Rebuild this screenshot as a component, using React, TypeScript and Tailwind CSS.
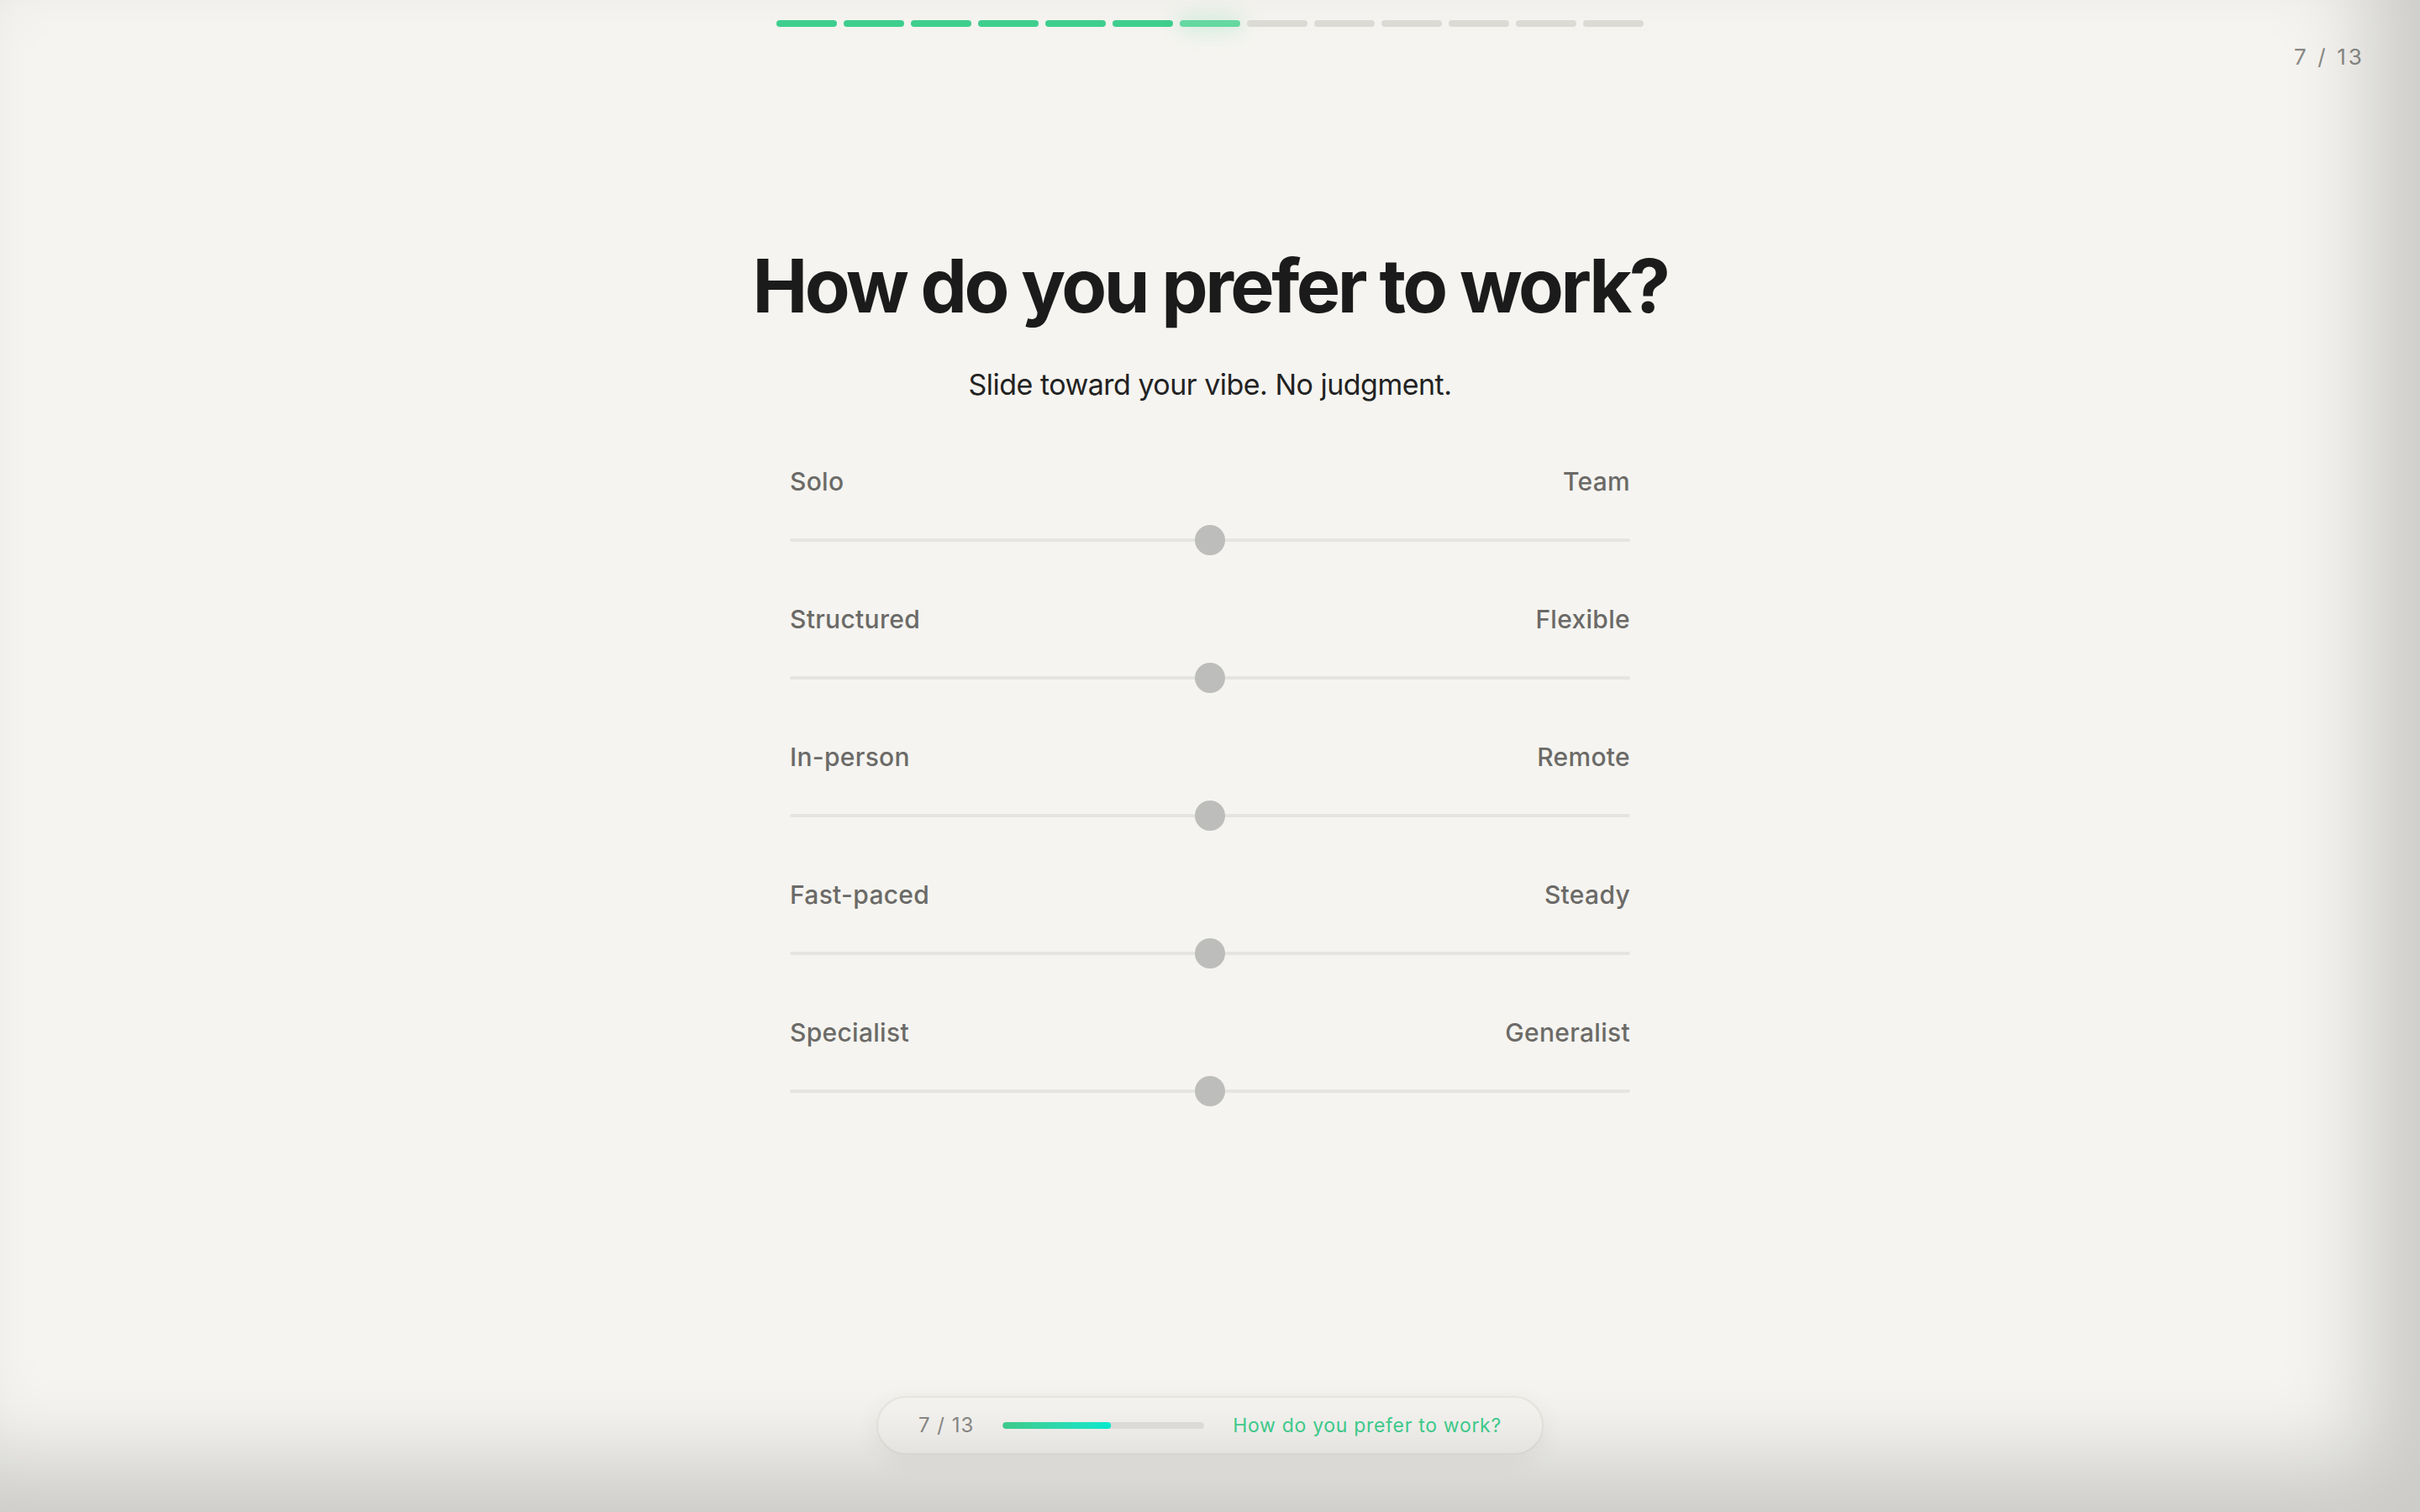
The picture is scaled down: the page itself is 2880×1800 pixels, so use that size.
import { useState } from 'react';

const TOTAL_STEPS = 13;
const CURRENT_STEP = 7;

const SCALES = [
  { id: 'social', left: 'Solo', right: 'Team' },
  { id: 'structure', left: 'Structured', right: 'Flexible' },
  { id: 'location', left: 'In-person', right: 'Remote' },
  { id: 'pace', left: 'Fast-paced', right: 'Steady' },
  { id: 'depth', left: 'Specialist', right: 'Generalist' },
];

function StepBar() {
  return (
    <div className="flex justify-center gap-2 pt-6">
      {Array.from({ length: TOTAL_STEPS }).map((_, i) => {
        const step = i + 1;
        let cls = 'bg-[#dcdbd6]';
        if (step < CURRENT_STEP) cls = 'bg-[#40cf8f]';
        if (step === CURRENT_STEP) cls = 'bg-[#66d9a2] shadow-[0_0_24px_rgba(64,207,143,0.45)]';
        return <div key={step} className={`h-2 w-[72px] rounded-full ${cls}`} />;
      })}
    </div>
  );
}

function ScaleRow({
  left,
  right,
  value,
  onChange,
}: {
  left: string;
  right: string;
  value: number;
  onChange: (v: number) => void;
}) {
  return (
    <div>
      <div className="flex justify-between text-[30px] leading-10 font-medium tracking-[0.01em] text-[#6b6a67]">
        <span>{left}</span>
        <span>{right}</span>
      </div>
      <div className="mt-8 flex h-9 items-center">
        <input
          type="range"
          min={0}
          max={100}
          value={value}
          onChange={(e) => onChange(Number(e.target.value))}
          className="h-1 w-full cursor-pointer appearance-none rounded-full bg-[#e5e4e0] outline-none [&::-webkit-slider-thumb]:h-9 [&::-webkit-slider-thumb]:w-9 [&::-webkit-slider-thumb]:appearance-none [&::-webkit-slider-thumb]:rounded-full [&::-webkit-slider-thumb]:bg-[#bdbdbb] [&::-moz-range-thumb]:h-9 [&::-moz-range-thumb]:w-9 [&::-moz-range-thumb]:rounded-full [&::-moz-range-thumb]:border-0 [&::-moz-range-thumb]:bg-[#bdbdbb]"
        />
      </div>
    </div>
  );
}

export default function App() {
  const [values, setValues] = useState<Record<string, number>>(
    Object.fromEntries(SCALES.map((s) => [s.id, 50]))
  );

  const pct = (CURRENT_STEP / TOTAL_STEPS) * 100;

  return (
    <div
      className="relative min-h-screen w-full overflow-hidden bg-[#f5f4f0] text-[#1b1b1b]"
      style={{ fontFamily: "Inter, 'Noto Sans', sans-serif" }}
    >
      <StepBar />

      <div className="absolute right-[66px] top-[50px] text-[26px] leading-9 tracking-[0.12em] text-[#8a8986]">
        {CURRENT_STEP} / {TOTAL_STEPS}
      </div>

      <main className="mx-auto flex w-[1000px] flex-col items-center pt-[256px]">
        <h1 className="whitespace-nowrap text-[88px] leading-[104px] font-bold tracking-[-0.04em] text-[#1b1b1b]">
          How do you prefer to work?
        </h1>
        <p className="mt-[42px] text-[34px] leading-[48px] tracking-[-0.015em] text-[#222]">
          Slide toward your vibe. No judgment.
        </p>

        {/* Sliders */}
        <div className="mt-[71px] flex w-full flex-col gap-[56px]">
          {SCALES.map((s) => (
            <ScaleRow
              key={s.id}
              left={s.left}
              right={s.right}
              value={values[s.id]}
              onChange={(v) => setValues({ ...values, [s.id]: v })}
            />
          ))}
        </div>
      </main>

      {/* Bottom progress pill */}
      <div className="absolute bottom-[68px] left-1/2 flex h-[70px] -translate-x-1/2 items-center gap-[34px] rounded-full border-2 border-[#e7e6e1] bg-[#f5f4f0] px-12 shadow-[0_8px_32px_rgba(0,0,0,0.06)]">
        <span className="text-[24px] tracking-[0.04em] text-[#8a8986]">
          {CURRENT_STEP} / {TOTAL_STEPS}
        </span>
        <div className="h-2 w-[240px] overflow-hidden rounded-full bg-[#e3e2de]">
          <div
            className="h-full rounded-full bg-gradient-to-r from-[#40cf8f] to-[#00f0d4]"
            style={{ width: `${pct}%` }}
          />
        </div>
        <span className="whitespace-nowrap text-[23px] tracking-[0.03em] text-[#40cf8f]">
          How do you prefer to work?
        </span>
      </div>

      {/* Edge vignette */}
      <div className="pointer-events-none absolute inset-0 shadow-[inset_-60px_-60px_100px_rgba(0,0,0,0.17)]" />
    </div>
  );
}
